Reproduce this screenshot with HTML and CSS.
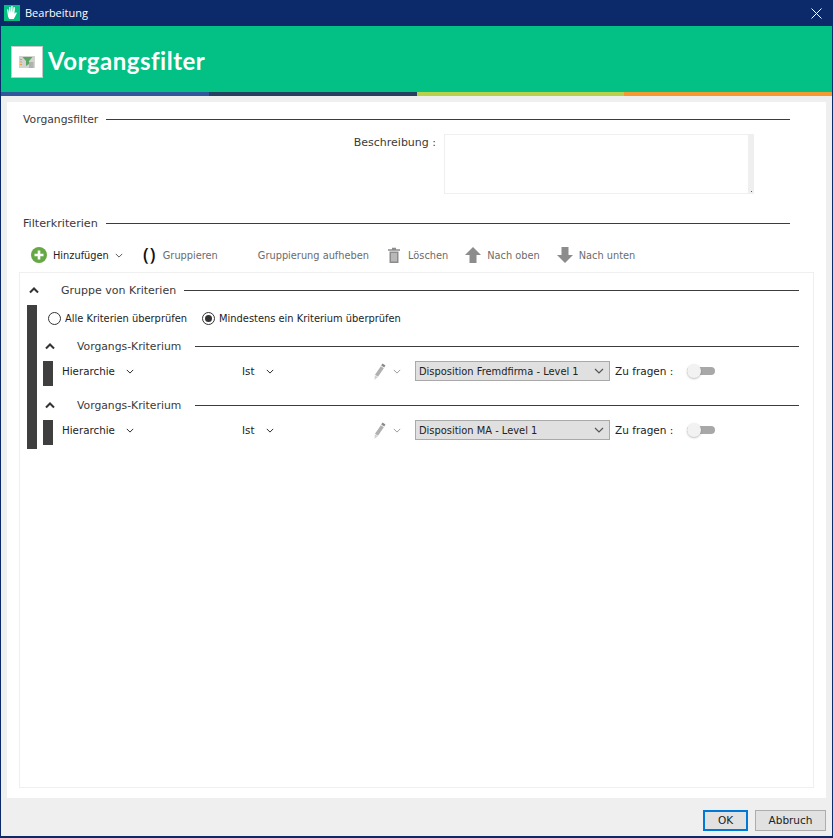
FILE: index.html
```html
<!DOCTYPE html>
<html lang="de">
<head>
  <meta charset="UTF-8">
  <meta name="viewport" content="width=device-width, initial-scale=1.0">
  <title>Bearbeitung</title>
  <link rel="stylesheet" href="styles.css">
</head>
<body>
  <svg class="sprites" width="0" height="0">
    <symbol id="chev" viewBox="0 0 10 6"><path d="M1 1l4 4 4-4" fill="none" stroke="currentColor" stroke-width="1.2"/></symbol>
    <symbol id="chev-up" viewBox="0 0 10 7"><path d="M1 5.5l4-4 4 4" fill="none" stroke="currentColor" stroke-width="2"/></symbol>
    <symbol id="pencil" viewBox="0 0 12 17"><path d="M8.500.500l3 2-1.300 2-3-2z" fill="#8a8a8a"/><path d="M6.800 3.200l3 2-5.800 8.600-3-2z" fill="#b0b0b0"/><path d="M.800 12.200l3 2-3.300 2.500z" fill="#d0d0d0"/></symbol>
  </svg>

  <div class="window">
    <div class="titlebar">
      <svg class="app-icon" width="16" height="16" viewBox="0 0 16 16">
        <rect width="16" height="16" fill="#06bf83"/>
        <path d="M3 4.500l1.200-.2.700 4 .2-6.300 1.300-.1.400 5.900.5-6.800 1.300.1.100 6.700.9-5.700 1.300.2-.4 6.500 1.400-1.500 1 .6-1.800 3.700-1.400 2.400H5.200l-1.200-2.400z" fill="#fff"/>
      </svg>
      <span class="titlebar-text">Bearbeitung</span>
      <svg class="close-x" width="11" height="11" viewBox="0 0 11 11"><path d="M.5.500l10 10M10.500.500l-10 10" stroke="#fff" stroke-width="1"/></svg>
    </div>

    <header class="banner">
      <div class="banner-icon">
        <svg width="16" height="12" viewBox="0 0 16 12">
          <rect width="16" height="12" fill="#d2d2ce"/>
          <path d="M3.500 1h10l-3.500 4v3l-3 2V5z" fill="#5aa564"/>
          <path d="M1 3.500h2M1 6h2M1 8.500h2" stroke="#ef9a45" stroke-width="1"/>
          <path d="M10 7h4.500M10 9h4.500M10 11h4.500" stroke="#8f8f8b" stroke-width="1"/>
        </svg>
      </div>
      <h1>Vorgangsfilter</h1>
    </header>
    <div class="strip">
      <span class="strip-blue"></span><span class="strip-dark"></span><span class="strip-lime"></span><span class="strip-orange"></span>
    </div>

    <main class="content">
      <div class="panel">
        <div class="section-title"><span>Vorgangsfilter</span><i></i></div>
        <div class="desc-row">
          <label class="desc-label">Beschreibung :</label>
          <div class="desc-box"><div class="desc-track"><b></b></div></div>
        </div>

        <div class="section-title filter-title"><span>Filterkriterien</span><i></i></div>
        <div class="toolbar">
          <button class="tool tool-add">
            <svg width="16" height="16" viewBox="0 0 16 16"><circle cx="8" cy="8" r="8" fill="#66a844"/><path d="M8 3.500v9M3.500 8h9" stroke="#fff" stroke-width="2.600"/></svg>
            <span>Hinzufügen</span>
            <svg class="chev-small" width="8" height="5"><use href="#chev"/></svg>
          </button>
          <button class="tool tool-group">
            <span class="parens">()</span>
            <span>Gruppieren</span>
          </button>
          <button class="tool tool-ungroup"><span>Gruppierung aufheben</span></button>
          <button class="tool tool-delete">
            <svg width="12" height="16" viewBox="0 0 12 16"><path d="M4 1.500h4M0 3h12" stroke="#8c8c8c" stroke-width="1.400"/><path d="M1.500 4.500h9V16h-9z" fill="#8c8c8c"/><path d="M4 6v8.500M6 6v8.500M8 6v8.500" stroke="#e4e4e4" stroke-width="1"/></svg>
            <span>Löschen</span>
          </button>
          <button class="tool tool-up">
            <svg width="16" height="16" viewBox="0 0 16 16"><path d="M8 0l8 8h-4.500v8h-7V8H0z" fill="#8c8c8c"/></svg>
            <span>Nach oben</span>
          </button>
          <button class="tool tool-down">
            <svg width="16" height="16" viewBox="0 0 16 16"><path d="M8 16L0 8h4.500V0h7v8H16z" fill="#8c8c8c"/></svg>
            <span>Nach unten</span>
          </button>
        </div>

        <div class="criteria">
          <div class="group-head">
            <svg class="chev-up" width="10" height="7"><use href="#chev-up"/></svg>
            <span>Gruppe von Kriterien</span><i></i>
          </div>
          <div class="group-body">
            <div class="group-bar"></div>
            <div class="group-items">
              <div class="radios">
                <label class="radio"><input type="radio" name="mode"><span>Alle Kriterien überprüfen</span></label>
                <label class="radio"><input type="radio" name="mode" checked><span>Mindestens ein Kriterium überprüfen</span></label>
              </div>

              <div class="criterion">
                <div class="crit-head">
                  <svg class="chev-up" width="10" height="7"><use href="#chev-up"/></svg>
                  <span>Vorgangs-Kriterium</span><i></i>
                </div>
                <div class="crit-row">
                  <div class="crit-bar"></div>
                  <div class="crit-field">Hierarchie <svg width="8" height="5"><use href="#chev"/></svg></div>
                  <div class="crit-op">Ist <svg width="8" height="5"><use href="#chev"/></svg></div>
                  <div class="crit-edit"><svg width="12" height="17"><use href="#pencil"/></svg><svg class="chev-light" width="8" height="5"><use href="#chev"/></svg></div>
                  <div class="crit-select"><span>Disposition Fremdfirma - Level 1</span><svg width="10" height="6"><use href="#chev"/></svg></div>
                  <span class="ask-label">Zu fragen :</span>
                  <div class="toggle"><b></b></div>
                </div>
              </div>

              <div class="criterion">
                <div class="crit-head">
                  <svg class="chev-up" width="10" height="7"><use href="#chev-up"/></svg>
                  <span>Vorgangs-Kriterium</span><i></i>
                </div>
                <div class="crit-row">
                  <div class="crit-bar"></div>
                  <div class="crit-field">Hierarchie <svg width="8" height="5"><use href="#chev"/></svg></div>
                  <div class="crit-op">Ist <svg width="8" height="5"><use href="#chev"/></svg></div>
                  <div class="crit-edit"><svg width="12" height="17"><use href="#pencil"/></svg><svg class="chev-light" width="8" height="5"><use href="#chev"/></svg></div>
                  <div class="crit-select"><span>Disposition MA - Level 1</span><svg width="10" height="6"><use href="#chev"/></svg></div>
                  <span class="ask-label">Zu fragen :</span>
                  <div class="toggle"><b></b></div>
                </div>
              </div>
            </div>
          </div>
        </div>
      </div>
    </main>

    <footer class="actions">
      <button class="btn btn-ok">OK</button>
      <button class="btn">Abbruch</button>
    </footer>
  </div>
</body>
</html>
```

FILE: styles.css
```css
* {
  box-sizing: border-box;
}

html, body {
  margin: 0;
  height: 100%;
  overflow: hidden;
}

body {
  font-family: "DejaVu Sans", sans-serif;
  font-size: 9.9px;
  color: #3a3a3a;
}

.sprites {
  position: absolute;
}

.window {
  display: flex;
  flex-direction: column;
  height: 838px;
  background: #efefef;
  border: solid #0c2a69;
  border-width: 0 1px 2px 1px;
}

.titlebar {
  display: flex;
  flex: none;
  align-items: center;
  height: 26px;
  margin: 0 -1px;
  padding: 0 11px 0 4px;
  background: #0c2a69;
  color: #fff;
  font-family: "Open Sans", sans-serif;
  font-size: 11px;
}

.app-icon {
  margin-right: 5px;
}

.titlebar-text {
  flex: 1;
  padding-bottom: 2px;
}

.banner {
  display: flex;
  flex: none;
  align-items: center;
  gap: 5px;
  height: 66px;
  padding: 5px 0 0 10px;
  background: #03c184;
}

.banner-icon {
  display: flex;
  align-items: center;
  justify-content: center;
  width: 32px;
  height: 32px;
  background: #fff;
  border: 1px solid #c8c8c8;
}

.banner h1 {
  margin: 0 0 2px;
  color: #fff;
  font-size: 24px;
  font-weight: 700;
  font-family: Lato, sans-serif;
  letter-spacing: 0.5px;
}

.strip {
  display: flex;
  flex: none;
  height: 4px;
}

.strip span {
  flex: 1;
}

.strip-blue { background: #30569c; }
.strip-dark { background: #28405f; }
.strip-lime { background: #b7d14a; }
.strip-orange { background: #f59a31; }

.content {
  flex: 1;
  min-height: 0;
  padding: 6px 6px 0 6px;
}

.panel {
  height: 100%;
  padding: 14px 12px 9px 12px;
  background: #fff;
}

.section-title {
  display: flex;
  align-items: center;
  gap: 8px;
  height: 6px;
  padding: 0 24px 0 4px;
  font-size: 10.8px;
  white-space: nowrap;
}

.section-title i,
.group-head i,
.crit-head i {
  flex: 1;
  border-top: 1px solid #3c3c3c;
}

.desc-row {
  display: flex;
  justify-content: flex-end;
  gap: 8px;
  margin-top: 12px;
  padding-right: 60px;
}

.desc-label {
  padding-top: 2px;
  font-size: 11px;
}

.desc-box {
  display: flex;
  justify-content: flex-end;
  width: 310px;
  height: 60px;
  border: 1px solid #efefef;
}

.desc-track {
  position: relative;
  width: 5px;
  background: #efefef;
}

.desc-track b {
  position: absolute;
  right: 1px;
  bottom: 1px;
  width: 1px;
  height: 1px;
  background: #555;
}

.filter-title {
  margin-top: 26px;
  font-size: 11.2px;
}

.toolbar {
  display: flex;
  align-items: center;
  height: 32px;
  margin-top: 13px;
  padding-left: 12px;
  font-size: 9.8px;
}

.tool {
  display: flex;
  align-items: center;
  gap: 6px;
  padding: 0;
  background: none;
  border: 0;
  color: #6b6b6b;
  font: inherit;
  white-space: nowrap;
}

.tool-add {
  color: #222;
  margin-right: 20px;
}

.parens {
  width: 14px;
  padding-bottom: 3px;
  color: #111;
  font-size: 18px;
  line-height: 18px;
  font-family: "Open Sans", sans-serif;
  font-weight: 600;
  letter-spacing: 1px;
}

.tool-group { margin-right: 40px; }
.tool-ungroup { margin-right: 19px; }
.tool-delete { margin-right: 17px; gap: 8px; }
.tool-up { margin-right: 17px; }

.chev-small { color: #555; }

.criteria {
  height: 516px;
  margin-top: 1px;
  padding: 0 14px 0 7px;
  border: 1px solid #efefef;
}

.group-head,
.crit-head {
  display: flex;
  align-items: center;
  white-space: nowrap;
}

.group-head {
  height: 32px;
  padding: 2px 0 0 2px;
  color: #3a3a3a;
}

.group-head span {
  margin: 0 8px 0 22px;
  font-size: 11px;
}

.group-body {
  display: flex;
  gap: 6px;
}

.group-bar {
  width: 10px;
  height: 144px;
  background: #3f3f3f;
}

.group-items {
  flex: 1;
}

.radios {
  display: flex;
  align-items: center;
  gap: 15px;
  height: 26px;
  padding-left: 5px;
  color: #222;
}

.radio {
  display: flex;
  align-items: center;
  gap: 4px;
}

.radio input {
  appearance: none;
  display: grid;
  place-items: center;
  width: 13px;
  height: 13px;
  margin: 0;
  background: #fff;
  border: 1px solid #333;
  border-radius: 50%;
}

.radio input:checked::after {
  content: "";
  width: 7px;
  height: 7px;
  background: #333;
  border-radius: 50%;
}

.criterion {
  height: 59px;
}

.crit-head {
  height: 30px;
  padding-left: 2px;
}

.crit-head span {
  margin: 0 14px 0 22px;
  font-size: 10.8px;
}

.chev-up {
  flex: none;
  color: #333;
}

.crit-row {
  display: flex;
  align-items: flex-start;
  color: #222;
}

.crit-bar {
  width: 10px;
  height: 25px;
  background: #3f3f3f;
}

.crit-field {
  display: flex;
  align-items: center;
  gap: 11px;
  width: 180px;
  height: 20px;
  margin-left: 9px;
  font-size: 10.3px;
  white-space: nowrap;
}

.crit-op {
  display: flex;
  align-items: center;
  gap: 12px;
  width: 132px;
  height: 20px;
  font-size: 10.3px;
  white-space: nowrap;
}

.crit-edit {
  display: flex;
  align-items: center;
  gap: 7px;
  width: 41px;
  height: 20px;
}

.chev-light { color: #999; }

.crit-select {
  display: flex;
  align-items: center;
  justify-content: space-between;
  width: 195px;
  height: 20px;
  padding: 0 5px 0 3px;
  background: #e0e0e0;
  border: 1px solid #a9a9a9;
  white-space: nowrap;
}

.crit-select svg {
  color: #555;
}

.ask-label {
  display: flex;
  align-items: center;
  width: 72px;
  height: 20px;
  margin-left: 5px;
  font-size: 10.5px;
  white-space: nowrap;
}

.toggle {
  position: relative;
  width: 28px;
  height: 8px;
  margin-top: 6px;
  background: #a8a8a8;
  border-radius: 4px;
}

.toggle b {
  position: absolute;
  top: -3px;
  left: 0;
  width: 14px;
  height: 14px;
  background: #f2f2f2;
  border-radius: 50%;
  box-shadow: 0 1px 2px rgba(0, 0, 0, 0.25);
}

.actions {
  display: flex;
  flex: none;
  justify-content: flex-end;
  gap: 7px;
  height: 38px;
  padding: 12px 6px 0 0;
}

.btn {
  width: 71px;
  height: 21px;
  padding: 0 0 2px;
  background: #e1e1e1;
  border: 1px solid #adadad;
  color: #222;
  font: inherit;
  font-size: 10.5px;
}

.btn-ok {
  width: 45px;
  border: 2px solid #0078d7;
}
```
